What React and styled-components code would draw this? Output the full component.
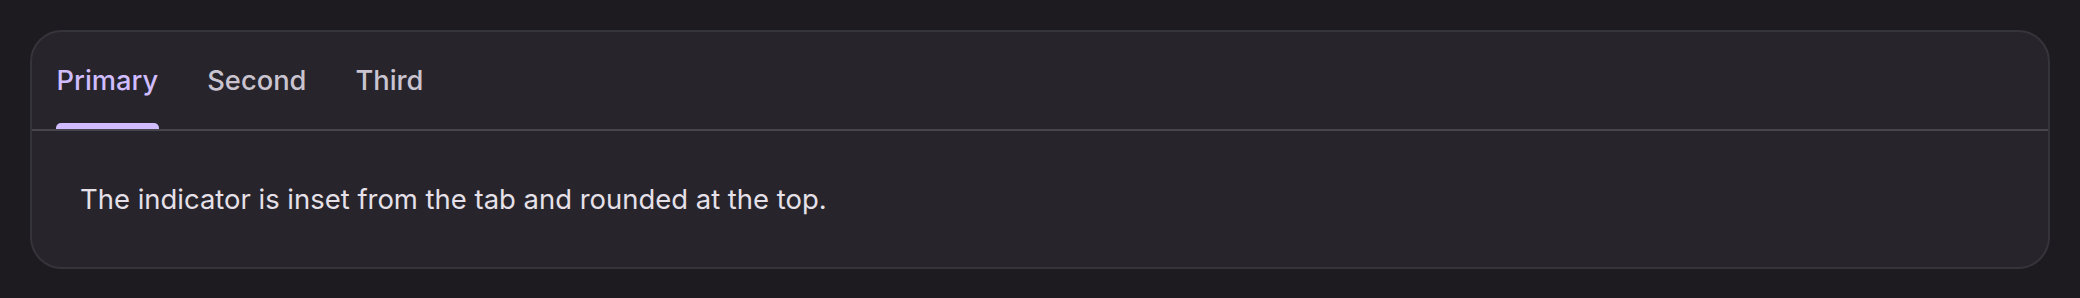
import React, { useState } from "react";
import styled, { createGlobalStyle } from "styled-components";

const Global = createGlobalStyle`
  html, body { margin: 0; padding: 0; background: #1d1b20; }
  body { font-family: Inter, "Noto Sans", sans-serif; }
`;

const Page = styled.div`
  padding: 30px;
  background: #1d1b20;
  min-height: 298px;
  box-sizing: border-box;
`;

const Card = styled.div`
  background: #27252b;
  border: 2px solid #36343b;
  border-radius: 32px;
  overflow: hidden;
`;

const TabList = styled.div`
  display: flex;
  height: 97px;
  border-bottom: 2px solid #49454f;
`;

const Tab = styled.button`
  position: relative;
  background: none;
  border: none;
  margin: 0;
  padding: 0 24.5px 1px;
  font-family: Inter, "Noto Sans", sans-serif;
  font-size: 27.3px;
  font-weight: 500;
  color: ${(p) => (p.$active ? "#d0bcff" : "#cac4d0")};
  cursor: pointer;
  display: flex;
  align-items: center;
`;

const Indicator = styled.span`
  position: absolute;
  left: 23.5px;
  right: 23.5px;
  bottom: 0;
  height: 6px;
  background: #d0bcff;
  border-radius: 5px 5px 0 0;
`;

const Panel = styled.div`
  padding: 48px 48px 48px;
  font-size: 27.45px;
  line-height: 40px;
  color: #e6e0e9;
`;

const tabs = ["Primary", "Second", "Third"];

export default function App() {
  const [active, setActive] = useState(0);
  return (
    <>
      <Global />
      <Page>
        <Card>
          <TabList>
            {tabs.map((t, i) => (
              <Tab key={t} $active={i === active} onClick={() => setActive(i)}>
                {t}
                {i === active && <Indicator />}
              </Tab>
            ))}
          </TabList>
          <Panel>The indicator is inset from the tab and rounded at the top.</Panel>
        </Card>
      </Page>
    </>
  );
}
